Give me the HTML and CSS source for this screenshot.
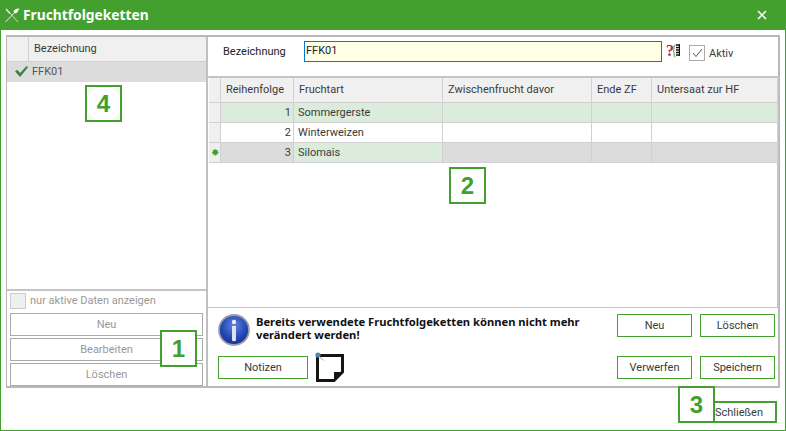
FILE: index.html
```html
<!DOCTYPE html>
<html lang="de">
<head>
<meta charset="utf-8">
<title>Fruchtfolgeketten</title>
<link rel="stylesheet" href="styles.css">
</head>
<body>
<div class="window">
  <header class="titlebar">
    <svg class="app-icon" width="16" height="16" viewBox="0 0 16 16" fill="none" stroke="#e4efe0" stroke-width="1"><path d="M1.500 15 L11 5"/><path d="M4 4 L14 15" stroke-width=".8"/><path d="M9.500 5 C10 2.500 13 1 15.500 1.500 C14 3 14 6 11 6.500 Z" fill="#fff" stroke="none"/><path d="M2 2 L6 6.500" stroke-width="1.500"/></svg>
    <h1 class="title">Fruchtfolgeketten</h1>
    <svg class="close" width="10" height="10" viewBox="0 0 10 10" stroke="#fff" stroke-width="1.500"><path d="M1 1 L9 9 M9 1 L1 9"/></svg>
  </header>
  <div class="content">
    <div class="panel">
      <aside class="left">
        <div class="left-grid">
          <div class="lg-head"><span class="lg-ind"></span><span class="lg-title">Bezeichnung</span></div>
          <div class="lg-row">
            <span class="lg-ind-row"><svg width="15" height="13" viewBox="0 0 16 14"><path d="M1 7 L3.500 5 L6.500 8.500 L13.500 1 L15 2.500 L6.500 13 Z" fill="#3f7f3f"/></svg></span>
            <span>FFK01</span>
          </div>
        </div>
        <label class="filter"><span class="cb-off"></span>nur aktive Daten anzeigen</label>
        <div class="left-buttons">
          <button class="btn-off">Neu</button>
          <button class="btn-off">Bearbeiten</button>
          <button class="btn-off">Löschen</button>
        </div>
      </aside>
      <section class="right">
        <div class="form-row">
          <span class="form-label">Bezeichnung</span>
          <input class="name-input" value="FFK01">
          <svg class="qm-icon" width="16" height="16" viewBox="0 0 16 16"><text x="0" y="13" class="qm">?</text><path d="M9.500 2 Q8 2 8 4 L8 6.500 Q8 8 7 8 Q8 8 8 9.500 L8 12 Q8 14 9.500 14" fill="none" stroke="#3c9a3c" stroke-width="1"/><path d="M10 2h4M10 4.500h4M10 7h4M10 9.500h4M10 12h4" stroke="#111" stroke-width="1.600"/><path d="M13.500 1v12" stroke="#111" stroke-width="1"/></svg>
          <span class="cb-on"><svg width="11" height="10" viewBox="0 0 11 10" fill="none" stroke="#555" stroke-width="1"><path d="M1 5 L4 8.500 L10 1"/></svg></span>
          <span class="aktiv">Aktiv</span>
        </div>
        <div class="table-wrap">
          <div class="table">
            <div class="th"></div><div class="th">Reihenfolge</div><div class="th">Fruchtart</div><div class="th">Zwischenfrucht davor</div><div class="th">Ende ZF</div><div class="th">Untersaat zur HF</div>

            <div class="ind"></div><div class="td green num">1</div><div class="td green">Sommergerste</div><div class="td green"></div><div class="td green"></div><div class="td green"></div>

            <div class="ind"></div><div class="td num">2</div><div class="td">Winterweizen</div><div class="td"></div><div class="td"></div><div class="td"></div>

            <div class="ind star">✸</div><div class="td grey num">3</div><div class="td green">Silomais</div><div class="td grey"></div><div class="td grey"></div><div class="td grey"></div>
          </div>
        </div>
        <div class="actions">
          <div class="actions-left">
            <div class="info">
              <svg width="32" height="32" viewBox="0 0 32 32">
                <defs><radialGradient id="blue" cx=".5" cy=".35" r=".7"><stop offset="0" stop-color="#5f86e0"/><stop offset=".6" stop-color="#2347b5"/><stop offset="1" stop-color="#142c8c"/></radialGradient></defs>
                <circle cx="16" cy="16" r="15" fill="url(#blue)" stroke="#9a9ea6" stroke-width="1.800"/>
                <circle cx="16" cy="8" r="2.200" fill="#e8eef8"/>
                <path d="M14 12h4v14.500q-2 1.500-4 0z" fill="#dfe4ec"/>
              </svg>
              <p class="info-text">Bereits verwendete Fruchtfolgeketten können nicht mehr verändert werden!</p>
            </div>
            <div class="notes">
              <button class="btn notes-btn">Notizen</button>
              <svg class="note-icon" width="32" height="32" viewBox="0 0 32 32"><path d="M3.500 3.500 H28.500 V20 L20 28.500 H3.500 Z" fill="#fff" stroke="#151515" stroke-width="3"/><path d="M20 28.500 V20 H28.500 Z" fill="#151515"/><circle cx="4" cy="3" r="2.600" fill="#4f86b0"/><path d="M5.500 4.500 L9.500 8.500" stroke="#9ab" stroke-width="1"/></svg>
            </div>
          </div>
          <div class="actions-right">
            <button class="btn">Neu</button><button class="btn">Löschen</button>
            <button class="btn">Verwerfen</button><button class="btn">Speichern</button>
          </div>
        </div>
      </section>
    </div>
    <div class="footer"><button class="close-btn">Schließen</button></div>
  </div>
  <div class="callout c1">1</div>
  <div class="callout c2">2</div>
  <div class="callout c3">3</div>
  <div class="callout c4">4</div>
</div>
</body>
</html>
```
FILE: styles.css
```css
* { box-sizing: border-box; }
html, body { margin: 0; padding: 0; background: #fff; }
body { font: 11px Roboto, sans-serif; color: #3a3a3a; overflow: hidden; }
.window { position: relative; width: 786px; height: 431px; display: flex; flex-direction: column; border: 1px solid #43a02e; border-top: 0; }
.titlebar { flex: none; height: 30px; margin: 0 -1px; background: #43a02e; display: flex; align-items: center; padding: 0 19px 0 4px; color: #fff; }
.app-icon { flex: none; margin-right: 3px; }
.title { margin: -2px 0 0; flex: 1; font: bold 13.800px "Noto Sans", sans-serif; color: #fff; }
.close { flex: none; }
.content { flex: 1; display: flex; flex-direction: column; padding: 5px 5px 0 5px; }
.panel { flex: none; height: 353px; width: 774px; border: 1px solid #b8b8b8; border-width: 2px 2px 2px 1px; display: flex; }
.left { flex: none; width: 199px; display: flex; flex-direction: column; }
.left-grid { height: 254px; border-bottom: 2px solid #c4c4c4; margin-bottom: 0; }
.lg-head { height: 25px; background: #f0f0f0; display: flex; border-bottom: 1px solid #d0d0d0; }
.lg-ind { width: 22px; border-right: 1px solid #d0d0d0; }
.lg-title { padding: 5px 0 0 5px; }
.lg-row { height: 20px; padding-bottom: 1px; background: #dcdcdc; display: flex; align-items: center; color: #555; }
.lg-ind-row { width: 25px; display: flex; justify-content: center; padding-left: 3px; }
.filter { height: 19px; padding-left: 3px; display: flex; align-items: center; gap: 4px; color: #999; }
.cb-off { width: 16px; height: 16px; background: #efefef; border: 1px solid #ccc; }
.left-buttons { display: flex; flex-direction: column; gap: 2px; padding: 3px 3px 0 3px; }
.btn-off { height: 23px; border: 1px solid #aaa; background: #fff; color: #999; font: 11px Roboto, sans-serif; padding: 0; }
.right { flex: none; width: 573px; border-left: 2px solid #c0c0c0; display: flex; flex-direction: column; }
.form-row { flex: none; height: 39px; display: flex; align-items: flex-start; padding: 4px 0 0 15px; }
.form-label { width: 81px; color: #222; padding-top: 4px; }
.name-input { width: 358px; height: 21px; border: 1px solid #0078d7; background: #ffffe5; font: 11px Roboto, sans-serif; color: #222; padding: 0 1px 2px; outline: 0; border-radius: 0; }
.qm-icon { margin: 2px 0 0 4px; flex: none; }
.qm { font: bold 16px "Liberation Serif", serif; fill: #b5213f; }
.cb-on { width: 16px; height: 16px; margin: 4px 0 0 7px; border: 1px solid #aaa; display: flex; align-items: center; justify-content: center; }
.aktiv { margin: 6px 0 0 4px; }
.table-wrap { flex: none; height: 232px; border-top: 2px solid #c4c4c4; border-right: 2px solid #c4c4c4; border-bottom: 1px solid #c4c4c4; padding-left: 1px; }
.table { display: grid; grid-template-columns: 12px 73px 149px 149px 60px 126px; grid-template-rows: 25px 20px 20px 20px; }
.th { background: #f0f0f0; border-right: 1px solid #d0d0d0; border-bottom: 1px solid #d0d0d0; padding: 5px 0 0 5px; white-space: nowrap; }
.ind { background: #f0f0f0; border-right: 1px solid #d0d0d0; border-bottom: 1px solid #d0d0d0; }
.star { color: #2fa52f; font-size: 10px; line-height: 19px; text-align: center; background: #eee; }
.td { border-right: 1px solid #d0d0d0; border-bottom: 1px solid #d0d0d0; padding: 3px 1px 0 4px; white-space: nowrap; background: #fff; }
.num { text-align: right; padding-right: 2px; }
.green { background: #dcecdc; }
.grey { background: #dcdcdc; }
.actions { flex: 1; display: flex; justify-content: space-between; padding: 6px 4px 0 10px; }
.actions-left { display: flex; flex-direction: column; }
.info { display: flex; gap: 6px; height: 42px; }
.info-text { margin: 1px 0 0; width: 340px; font: bold 11.200px/13px "Noto Sans", sans-serif; color: #111; }
.notes { display: flex; gap: 6px; align-items: flex-start; margin-top: -4px; }
.notes-btn { width: 90px; margin-top: 4px; }
.note-icon { flex: none; }
.actions-right { display: grid; grid-template-columns: 75px 75px; grid-template-rows: 23px 23px; column-gap: 8px; row-gap: 19px; }
.btn { height: 23px; border: 1px solid #43a02e; background: #fff; color: #3a3a3a; font: 11px Roboto, sans-serif; padding: 0; }
.footer { flex: 1; display: flex; justify-content: flex-end; align-items: flex-start; padding: 13px 3px 0 0; }
.close-btn { width: 76px; height: 22px; border: 2px solid #43a02e; background: #fff; color: #3a3a3a; font: 11px Roboto, sans-serif; padding: 0; white-space: nowrap; }
.callout { position: absolute; width: 37px; height: 37px; border: 2px solid #43a02e; background: #fff; color: #43a02e; font: bold 24px/33px "Liberation Sans", sans-serif; text-align: center; }
.c1 { left: 159px; top: 330px; }
.c2 { left: 448px; top: 167px; }
.c3 { left: 677px; top: 386px; }
.c4 { left: 84px; top: 85px; }
```
